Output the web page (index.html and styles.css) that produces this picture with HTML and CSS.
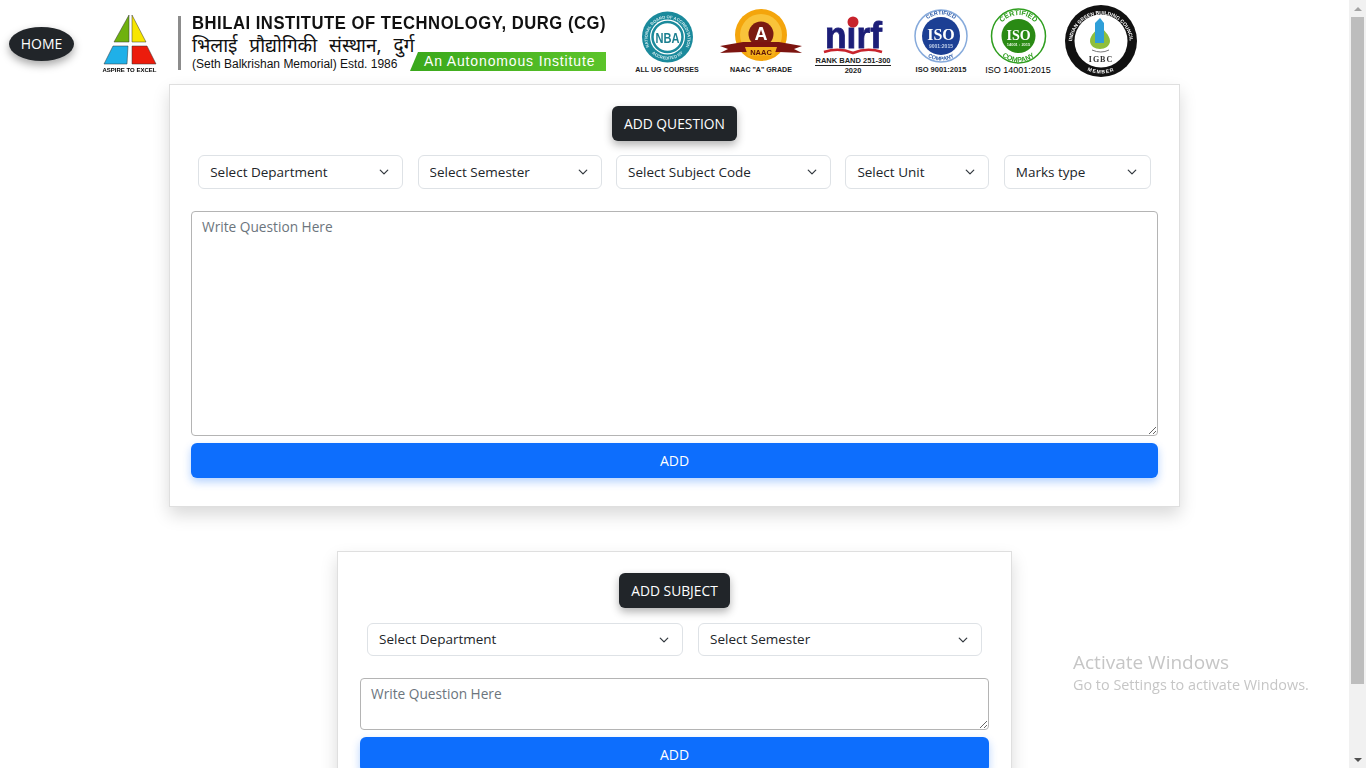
FILE: index.html
```html
<!DOCTYPE html>
<html lang="en">
<head>
    <meta charset="UTF-8">
    <meta name="viewport" content="width=device-width, initial-scale=1.0">
    <title>Add Question</title>
    <link rel="stylesheet" href="styles.css">
</head>
<body>
    <header class="top-bar">
        <button class="home-btn">HOME</button>

        <svg class="logo" viewBox="102 14 56 60" width="56" height="60">
            <polygon points="129,15 114,42 129,42" fill="#6fb10e" stroke="#333" stroke-width=".5"/>
            <polygon points="132,15 132,42 146,42" fill="#f7e600" stroke="#333" stroke-width=".5"/>
            <polygon points="113,46 128,46 127,64 104,64" fill="#1fb0e8" stroke="#333" stroke-width=".5"/>
            <polygon points="132,46 147,46 156,64 132,64" fill="#ec1c0c" stroke="#333" stroke-width=".5"/>
            <text x="102.5" y="72" font-family="Liberation Sans" font-weight="700" font-size="6" textLength="54" lengthAdjust="spacingAndGlyphs">ASPIRE TO EXCEL</text>
        </svg>

        <div class="divider"></div>

        <div class="brand">
            <div class="brand-title">BHILAI INSTITUTE OF TECHNOLOGY, DURG (CG)</div>
            <div class="brand-hindi">भिलाई प्रौद्योगिकी संस्थान, दुर्ग</div>
            <div class="brand-foot">
                <span class="brand-estd">(Seth Balkrishan Memorial) Estd. 1986</span>
                <span class="brand-tag">An Autonomous Institute</span>
            </div>
        </div>

        <div class="badges">
            <figure class="badge badge-nba">
                <svg viewBox="0 0 66 60" width="66" height="60">
                    <defs>
                        <path id="nbaTop" d="M15 41a20 20 0 1 1 37 0"/>
                        <path id="nbaBottom" d="M11 32a22.500 22.500 0 0 0 45 0"/>
                    </defs>
                    <circle cx="33.500" cy="32" r="25.500" fill="#1b8a9c"/>
                    <circle cx="33.500" cy="32" r="17.500" fill="#fff"/>
                    <circle cx="33.500" cy="32" r="15" fill="none" stroke="#1b8a9c" stroke-width="2.500"/>
                    <text font-family="Liberation Sans" font-weight="700" font-size="4.200" fill="#cfe8ec" text-anchor="middle"><textPath href="#nbaTop" startOffset="50%">NATIONAL BOARD OF ACCREDITATION</textPath></text>
                    <text font-family="Liberation Sans" font-weight="700" font-size="4.200" fill="#cfe8ec" text-anchor="middle"><textPath href="#nbaBottom" startOffset="50%">ACCREDITED BY</textPath></text>
                    <text x="33.500" y="38" text-anchor="middle" font-family="Liberation Sans" font-weight="700" font-size="15" fill="#1b7f90" textLength="24" lengthAdjust="spacingAndGlyphs">NBA</text>
                </svg>
                <figcaption>ALL UG COURSES</figcaption>
            </figure>

            <figure class="badge badge-naac">
                <svg viewBox="0 0 84 60" width="84" height="60">
                    <circle cx="42" cy="30" r="26" fill="#f4a50c"/>
                    <circle cx="42" cy="30" r="21" fill="#f9c33a"/>
                    <circle cx="42" cy="29" r="12.500" fill="#7a1a12"/>
                    <polygon points="1,41 24,37 60,37 83,41 75,44 83,48 60,47 24,47 1,48 9,44" fill="#7c1410"/>
                    <path d="M26 42h32l-3 9h-26z" fill="#f4b11c"/>
                    <text x="42" y="35" text-anchor="middle" font-family="Liberation Sans" font-weight="700" font-size="18" fill="#fff">A</text>
                    <text x="42" y="49.500" text-anchor="middle" font-family="Liberation Sans" font-weight="700" font-size="7.500" fill="#5c1208">NAAC</text>
                </svg>
                <figcaption>NAAC "A" GRADE</figcaption>
            </figure>

            <figure class="badge badge-nirf">
                <svg viewBox="0 0 76 46" width="76" height="46">
                    <text x="10" y="38" font-family="Liberation Sans" font-weight="700" font-size="36" fill="#1c1e78" stroke="#1c1e78" stroke-width=".8" textLength="57" lengthAdjust="spacingAndGlyphs">nirf</text>
                    <circle cx="38" cy="12" r="5.500" fill="#c8232c"/>
                    <path d="M9 42q15 -5 29 1q14 -6 29 -1" fill="none" stroke="#c8232c" stroke-width="2.500"/>
                </svg>
                <figcaption><span class="rank-line">RANK BAND 251-300</span><br>2020</figcaption>
            </figure>

            <figure class="badge badge-iso">
                <svg viewBox="0 0 54 60" width="54" height="60">
                    <defs>
                        <path id="isoTop" d="M5.500 31a21.500 21.500 0 0 1 43 0"/>
                        <path id="isoBottom" d="M2.500 31a24.500 24.500 0 0 0 49 0"/>
                    </defs>
                    <circle cx="27" cy="31" r="26" fill="#fff" stroke="#86aadb" stroke-width="1.500"/>
                    <circle cx="27" cy="31" r="19" fill="#1c3f94"/>
                    <text font-family="Liberation Sans" font-weight="700" font-size="5.500" fill="#2a5aa8" text-anchor="middle"><textPath href="#isoTop" startOffset="50%">CERTIFIED</textPath></text>
                    <text font-family="Liberation Sans" font-weight="700" font-size="5.500" fill="#2a5aa8" text-anchor="middle"><textPath href="#isoBottom" startOffset="50%">COMPANY</textPath></text>
                    <text x="27" y="35" text-anchor="middle" font-family="Liberation Serif" font-weight="700" font-size="16" fill="#fff">ISO</text>
                    <text x="27" y="43" text-anchor="middle" font-family="Liberation Sans" font-size="5" fill="#c4d2ea">9001:2015</text>
                </svg>
                <figcaption>ISO 9001:2015</figcaption>
            </figure>

            <figure class="badge badge-iso-green">
                <svg viewBox="0 0 66 60" width="66" height="60">
                    <defs>
                        <path id="grTop" d="M12.500 31a21 21 0 0 1 42 0"/>
                        <path id="grBottom" d="M7.500 31a26 26 0 0 0 52 0"/>
                    </defs>
                    <circle cx="33.500" cy="31" r="27" fill="#fff" stroke="#2f9e1f" stroke-width="1.500"/>
                    <circle cx="33.500" cy="31" r="17" fill="#2a8a14"/>
                    <text font-family="Liberation Sans" font-weight="700" font-size="7" fill="#2f9e1f" text-anchor="middle"><textPath href="#grTop" startOffset="50%">CERTIFIED</textPath></text>
                    <text font-family="Liberation Sans" font-weight="700" font-size="7" fill="#2f9e1f" text-anchor="middle"><textPath href="#grBottom" startOffset="50%">COMPANY</textPath></text>
                    <text x="33.500" y="35" text-anchor="middle" font-family="Liberation Serif" font-weight="700" font-size="14" fill="#fff">ISO</text>
                    <text x="33.500" y="41" text-anchor="middle" font-family="Liberation Sans" font-weight="700" font-size="4" fill="#e3f3dc">14001 : 2015</text>
                </svg>
                <figcaption>ISO 14001:2015</figcaption>
            </figure>

            <figure class="badge badge-igbc">
                <svg viewBox="0 0 72 72" width="72" height="72">
                    <defs>
                        <path id="igbcTop" d="M9 49a29 29 0 1 1 54 0"/>
                        <path id="igbcBottom" d="M3.500 36a32.500 32.500 0 0 0 65 0"/>
                    </defs>
                    <circle cx="36" cy="36" r="36" fill="#111"/>
                    <circle cx="36" cy="36" r="26.500" fill="#fff"/>
                    <path d="M35 20c-3 5-10 10-10 16c0 5 5 8 10 8c5 0 10-3 10-8c0-6-7-11-10-16z" fill="#8fbf3c"/>
                    <polygon points="30,38 30,18 35,13 39,18 39,38" fill="#2f9fd8"/>
                    <path d="M27 45q9 4 17 0" fill="none" stroke="#777" stroke-width="1"/>
                    <text x="36" y="57" text-anchor="middle" font-family="Liberation Serif" font-size="8" letter-spacing="1" fill="#333">IGBC</text>
                    <text font-family="Liberation Sans" font-weight="700" font-size="5" fill="#fff" text-anchor="middle"><textPath href="#igbcTop" startOffset="50%">INDIAN GREEN BUILDING COUNCIL</textPath></text>
                    <text font-family="Liberation Sans" font-weight="700" font-size="5" letter-spacing="1" fill="#fff" text-anchor="middle"><textPath href="#igbcBottom" startOffset="50%">MEMBER</textPath></text>
                </svg>
            </figure>
        </div>
    </header>

    <main class="content">
        <section class="card card-question">
            <div class="card-head"><button class="title-btn">ADD QUESTION</button></div>
            <div class="select-row">
                <select class="form-select sel-dept"><option>Select Department</option></select>
                <select class="form-select sel-sem"><option>Select Semester</option></select>
                <select class="form-select sel-code"><option>Select Subject Code</option></select>
                <select class="form-select sel-unit"><option>Select Unit</option></select>
                <select class="form-select sel-marks"><option>Marks type</option></select>
            </div>
            <textarea class="question-box box-large" placeholder="Write Question Here"></textarea>
            <button class="add-btn">ADD</button>
        </section>

        <section class="card card-subject">
            <div class="card-head"><button class="title-btn">ADD SUBJECT</button></div>
            <div class="select-row select-row-small">
                <select class="form-select sel-dept-wide"><option>Select Department</option></select>
                <select class="form-select sel-sem-wide"><option>Select Semester</option></select>
            </div>
            <textarea class="question-box box-small" placeholder="Write Question Here"></textarea>
            <button class="add-btn">ADD</button>
        </section>
    </main>

    <div class="activate">
        <div class="activate-title">Activate Windows</div>
        <div class="activate-sub">Go to Settings to activate Windows.</div>
    </div>

    <div class="scrollbar">
        <div class="scroll-arrow-up"></div>
        <div class="scroll-thumb"></div>
        <div class="scroll-arrow"></div>
    </div>
</body>
</html>
```

FILE: styles.css
```css
html, body {
    height: 768px;
    overflow: hidden;
}

body {
    margin: 0;
    background-color: #fff;
    color: #212529;
    font-family: 'Open Sans', 'Noto Sans', Arial, sans-serif;
    font-size: 14px;
}

/* header strip */
.top-bar {
    display: flex;
    align-items: flex-start;
    width: 1350px;
    height: 84px;
}

.home-btn {
    width: 65px;
    height: 34px;
    margin: 27px 0 0 9px;
    padding: 0 0 2px;
    border: none;
    border-radius: 50%;
    background-color: #212529;
    color: #fff;
    font-family: inherit;
    font-size: 14px;
    box-shadow: 0 4px 8px rgba(0, 0, 0, 0.35);
}

.logo {
    margin: 14px 0 0 28px;
    flex: none;
    filter: blur(0.3px);
}

.divider {
    width: 3px;
    height: 54px;
    margin: 16px 0 0 20px;
    background-color: #8c8c8c;
}

.brand {
    width: 414px;
    margin: 12px 0 0 11px;
    font-family: 'Liberation Sans', Arial, sans-serif;
    color: #111;
}

.brand-title {
    font-size: 19px;
    font-weight: 700;
    line-height: 22px;
    white-space: nowrap;
    letter-spacing: 0.6px;
    transform: scaleX(0.875);
    transform-origin: left center;
}

.brand-hindi {
    height: 18px;
    font-family: 'Noto Sans', 'Noto Sans Devanagari', 'Liberation Sans', sans-serif;
    font-size: 19px;
    line-height: 22px;
    word-spacing: 7px;
    white-space: nowrap;
}

.brand-foot {
    display: flex;
    justify-content: space-between;
    align-items: flex-end;
    height: 19px;
}

.brand-estd {
    font-size: 12px;
    line-height: 14px;
    white-space: nowrap;
}

.brand-tag {
    width: 196px;
    height: 19px;
    padding-left: 14px;
    box-sizing: border-box;
    background: linear-gradient(90deg, #3aa81c, #5cc42a);
    clip-path: polygon(8px 0, 100% 0, 100% 100%, 0 100%);
    color: #fff;
    font-size: 14px;
    line-height: 19px;
    letter-spacing: 0.85px;
    white-space: nowrap;
}

.badges {
    display: flex;
    margin: 5px 0 0 28px;
}

.badge {
    margin: 0;
    text-align: center;
    font-family: 'Liberation Sans', Arial, sans-serif;
    font-size: 7.1px;
    font-weight: 700;
    line-height: 10px;
    color: #222;
    white-space: nowrap;
}

.badge svg {
    display: block;
    filter: blur(0.3px);
}

.badge-nba { width: 66px; }
.badge-naac { width: 84px; margin-left: 19px; }
.badge-nirf { width: 76px; margin-left: 12px; padding-top: 5px; font-size: 7.5px; }
.badge-iso { width: 54px; margin-left: 23px; font-size: 7.5px; }
.badge-iso-green { width: 66px; margin-left: 17px; font-size: 9px; font-weight: 400; color: #000; }
.badge-igbc { width: 72px; margin-left: 14px; }

.rank-line { border-bottom: 1px solid #222; }

/* cards */
.content {
    display: flex;
    flex-direction: column;
    align-items: center;
    width: 1349px;
}

.card {
    box-sizing: border-box;
    flex: none;
    border: 1px solid rgba(0, 0, 0, 0.125);
    background-color: #fff;
    box-shadow: 0 8px 16px rgba(0, 0, 0, 0.15);
}

.card-question {
    width: 1011px;
    height: 423px;
    padding: 21px 21px 0;
}

.card-subject {
    width: 675px;
    height: 240px;
    margin-top: 44px;
    padding: 21px 22px 0;
}

.card-head {
    display: flex;
    justify-content: center;
}

.title-btn {
    height: 35px;
    padding: 0 12px;
    border: none;
    border-radius: 6px;
    background-color: #212529;
    color: #fff;
    font-family: inherit;
    font-size: 13.8px;
    box-shadow: 0 4px 8px rgba(0, 0, 0, 0.3);
}

.select-row {
    display: flex;
    justify-content: center;
    gap: 14.4px;
    margin-top: 14px;
}

.select-row-small {
    gap: 15px;
    margin-top: 15px;
}

.form-select {
    box-sizing: border-box;
    flex: none;
    height: 34px;
    padding: 0 11px 1px;
    border: 1px solid #dee2e6;
    border-radius: 6px;
    background-color: #fff;
    background-image: url("data:image/svg+xml,%3csvg xmlns='http://www.w3.org/2000/svg' viewBox='0 0 16 16'%3e%3cpath fill='none' stroke='%23343a40' stroke-linecap='round' stroke-linejoin='round' stroke-width='2' d='M2 5l6 6 6-6'/%3e%3c/svg%3e");
    background-repeat: no-repeat;
    background-position: right 12px center;
    background-size: 12px 10px;
    color: #212529;
    font-family: inherit;
    font-size: 13.5px;
    appearance: none;
}

.sel-dept { width: 205px; }
.sel-sem { width: 184px; }
.sel-code { width: 215px; }
.sel-unit { width: 144px; }
.sel-marks { width: 147px; }
.sel-dept-wide { width: 316px; height: 33px; }
.sel-sem-wide { width: 284px; height: 33px; }

.question-box {
    display: block;
    box-sizing: border-box;
    width: 100%;
    margin-top: 22px;
    padding: 5px 10px;
    border: 1px solid #b4b4b4;
    border-radius: 4px;
    color: #212529;
    font-family: inherit;
    font-size: 13.7px;
    line-height: 20px;
    outline: none;
}

.question-box::placeholder {
    color: #6c757d;
}

.box-large { height: 225px; }
.box-small { height: 52px; }

.add-btn {
    display: block;
    width: 100%;
    height: 35px;
    margin-top: 7px;
    border: none;
    border-radius: 6px;
    background-color: #0d6efd;
    color: #fff;
    font-family: inherit;
    font-size: 14px;
    box-shadow: 0 4px 8px rgba(13, 110, 253, 0.3);
}

/* windows watermark, sits over the page */
.activate {
    position: fixed;
    left: 1073px;
    top: 649px;
    color: #c6c6c6;
    pointer-events: none;
}

.activate-title {
    font-size: 19px;
    line-height: 26px;
}

.activate-sub {
    font-size: 14.4px;
    line-height: 20px;
}

/* browser scrollbar */
.scrollbar {
    position: fixed;
    top: 0;
    right: 0;
    width: 17px;
    height: 768px;
    background-color: #f1f1f1;
}

.scroll-thumb {
    width: 13px;
    height: 667px;
    margin: 17px 0 0 2px;
    background-color: #bdbdbd;
}

.scroll-arrow-up {
    position: absolute;
    left: 4.5px;
    top: 7px;
    border-left: 4px solid transparent;
    border-right: 4px solid transparent;
    border-bottom: 4px solid #a3a3a3;
}

.scroll-arrow {
    position: absolute;
    left: 4.5px;
    bottom: 6px;
    border-left: 4px solid transparent;
    border-right: 4px solid transparent;
    border-top: 4px solid #505050;
}
```
